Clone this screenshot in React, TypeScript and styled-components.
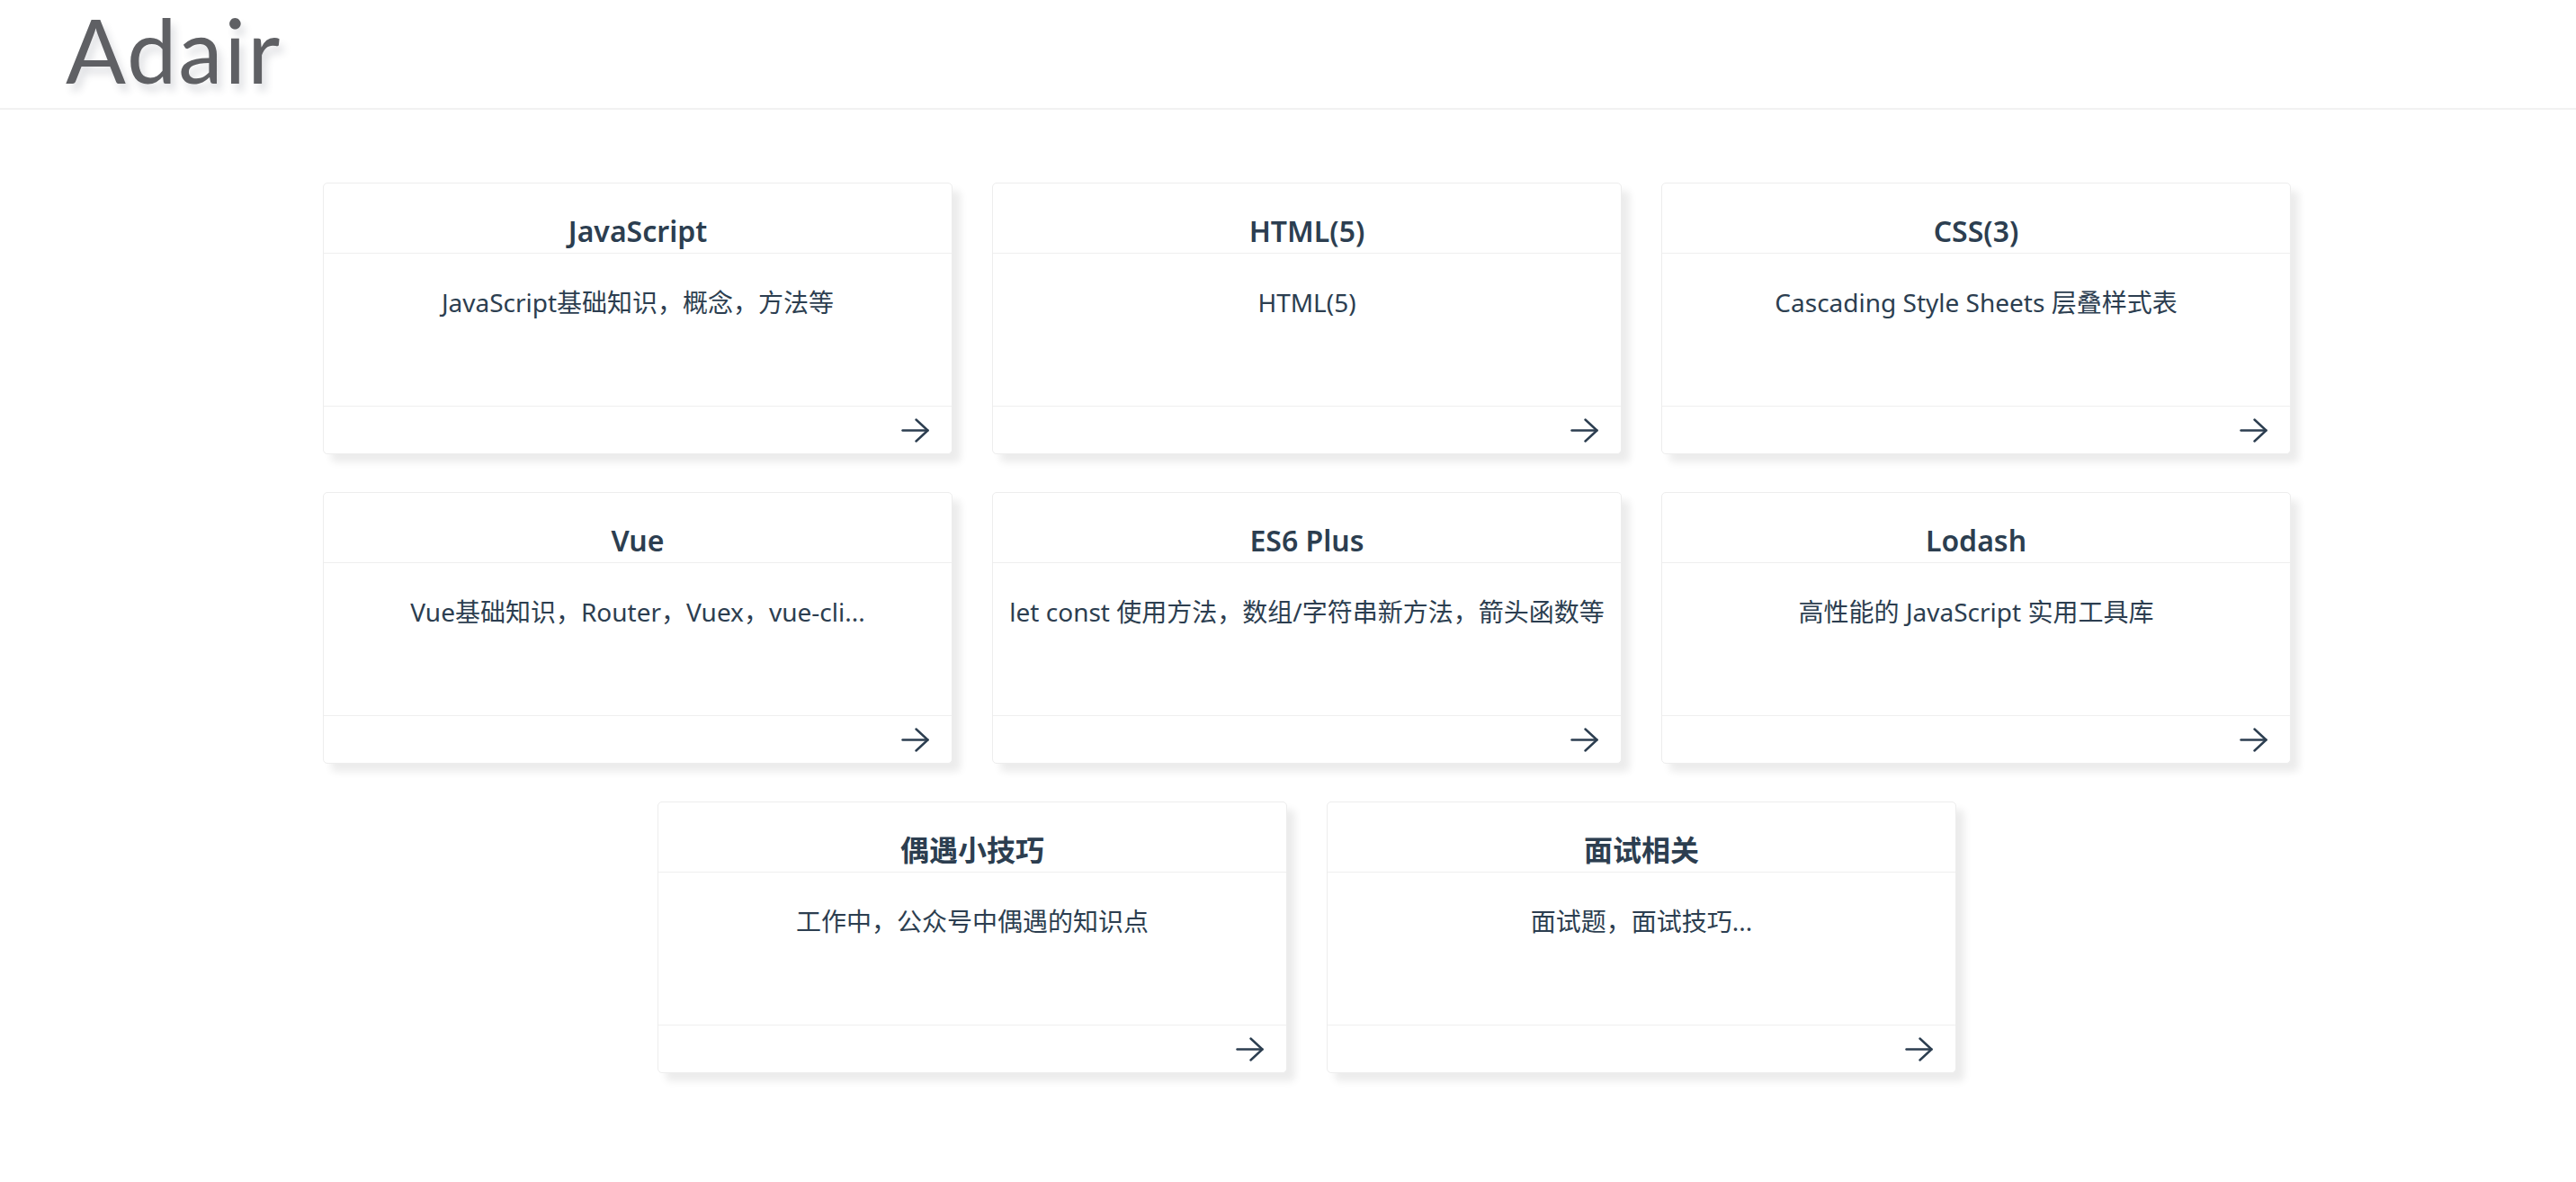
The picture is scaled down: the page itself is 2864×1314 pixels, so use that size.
import { ReactElement } from 'react'
import styled, { createGlobalStyle } from 'styled-components'

const GlobalStyle = createGlobalStyle`
  html, body {
    margin: 0;
    padding: 0;
    background: #fff;
  }
  body {
    font-family: "Noto Sans", "Noto Sans CJK SC", sans-serif;
    color: #2c3e50;
  }
`

const Header = styled.header`
  box-sizing: border-box;
  height: 122px;
  padding: 5px 0 0 73px;
  border-bottom: 2px solid #f1f1f1;
`

const Logo = styled.h1`
  margin: 0;
  font-family: Lato, "Open Sans", sans-serif;
  font-weight: 400;
  font-size: 99px;
  line-height: 1;
  letter-spacing: 2px;
  color: #5f6064;
  text-shadow: 5px 8px 8px rgba(60, 70, 90, 0.16);
`

const Main = styled.main`
  padding: 81px 0 60px 42px;
`

const Grid = styled.div`
  display: flex;
  flex-wrap: wrap;
  justify-content: center;
  gap: 42px 44px;
  width: 2188px;
  margin: 0 auto;
`

const Card = styled.a`
  box-sizing: border-box;
  display: flex;
  flex-direction: column;
  width: 700px;
  height: 302px;
  border: 1px solid #ededed;
  border-radius: 5px;
  background: #fff;
  box-shadow: 9px 9px 8px 0 rgba(0, 0, 0, 0.08);
  color: #2c3e50;
  text-decoration: none;
`

const CardHead = styled.div`
  box-sizing: border-box;
  height: 78px;
  padding-top: 33px;
  border-bottom: 1px solid #efefef;
  text-align: center;
`

const Title = styled.h2`
  margin: 0;
  font-size: 32px;
  font-weight: 600;
  line-height: 40px;
`

const CardBody = styled.p`
  flex: 1;
  margin: 0;
  padding: 34px 16px 0;
  font-size: 28px;
  line-height: 40px;
  text-align: center;
  white-space: nowrap;
`

const CardFoot = styled.div`
  box-sizing: border-box;
  height: 53px;
  display: flex;
  align-items: center;
  justify-content: flex-end;
  padding-right: 25px;
  border-top: 1px solid #efefef;
`

const Arrow = () => (
  <svg width="31" height="27" viewBox="0 0 31 27" fill="none" stroke="#2c3e50" strokeWidth="2.4" strokeLinecap="round" strokeLinejoin="round">
    <path d="M1.5 13.5H29.5" />
    <path d="M16.5 1.5L29.5 13.5L16.5 25.5" />
  </svg>
)

const topics = [
  { title: 'JavaScript', desc: 'JavaScript基础知识，概念，方法等' },
  { title: 'HTML(5)', desc: 'HTML(5)' },
  { title: 'CSS(3)', desc: 'Cascading Style Sheets 层叠样式表' },
  { title: 'Vue', desc: 'Vue基础知识，Router，Vuex，vue-cli...' },
  { title: 'ES6 Plus', desc: 'let const 使用方法，数组/字符串新方法，箭头函数等' },
  { title: 'Lodash', desc: '高性能的 JavaScript 实用工具库' },
  { title: '偶遇小技巧', desc: '工作中，公众号中偶遇的知识点' },
  { title: '面试相关', desc: '面试题，面试技巧...' },
]

export default function App(): ReactElement {
  return (
    <>
      <GlobalStyle />
      <Header>
        <Logo>Adair</Logo>
      </Header>
      <Main>
        <Grid>
          {topics.map((t) => (
            <Card key={t.title} href="#">
              <CardHead>
                <Title>{t.title}</Title>
              </CardHead>
              <CardBody>{t.desc}</CardBody>
              <CardFoot>
                <Arrow />
              </CardFoot>
            </Card>
          ))}
        </Grid>
      </Main>
    </>
  )
}
